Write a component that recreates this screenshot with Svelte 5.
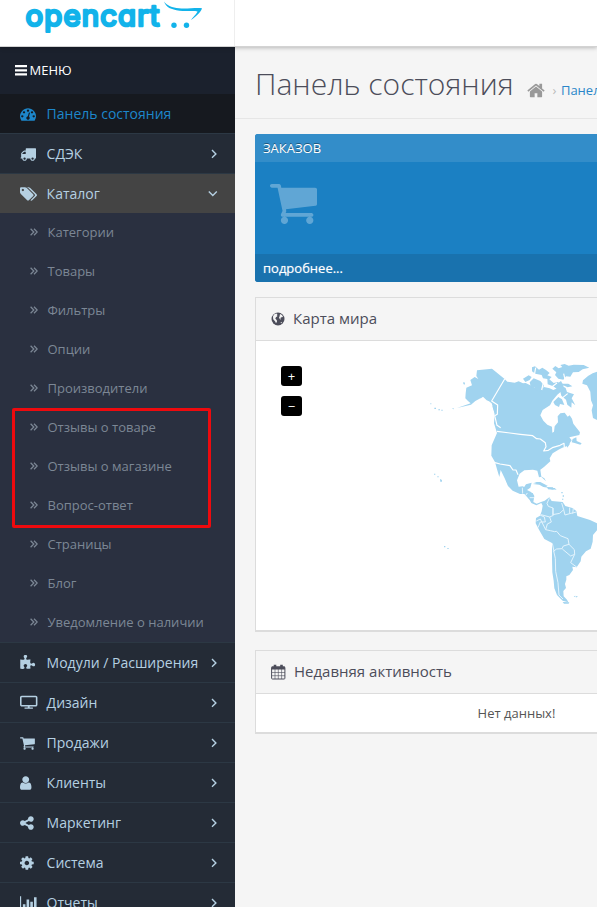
<script>
  const icons = {
    dash: 'M384 1152q0-53-37.500-90.500t-90.500-37.500-90.500 37.500-37.500 90.500 37.500 90.500 90.500 37.500 90.500-37.500 37.500-90.500zm192-448q0-53-37.500-90.500t-90.500-37.500-90.500 37.500-37.500 90.500 37.500 90.500 90.500 37.500 90.500-37.500 37.500-90.500zm428 481l101-382q6-26-7.500-48.500t-38.500-29.500-48 6.500-30 39.500l-101 382q-60 5-107 43.500t-63 98.500q-20 77 20 146t117 89 146-20 89-117q16-60-6-117t-72-91zm660-33q0-53-37.500-90.500t-90.500-37.500-90.500 37.500-37.500 90.500 37.500 90.500 90.500 37.500 90.500-37.500 37.500-90.500zm-640-640q0-53-37.500-90.500t-90.500-37.500-90.500 37.500-37.500 90.500 37.500 90.500 90.500 37.500 90.500-37.500 37.500-90.500zm448 192q0-53-37.500-90.500t-90.500-37.500-90.500 37.500-37.500 90.500 37.500 90.500 90.500 37.500 90.500-37.500 37.500-90.500zm320 448q0 261-141 483-19 29-54 29h-1402q-35 0-54-29-141-221-141-483 0-182 71-348t191-286 286-191 348-71 348 71 286 191 191 286 71 348z',
    truck: 'M640 1408q0-52-38-90t-90-38-90 38-38 90 38 90 90 38 90-38 38-90zm-384-512h384v-256h-158q-13 0-22 9l-195 195q-9 9-9 22v30zm1280 512q0-52-38-90t-90-38-90 38-38 90 38 90 90 38 90-38 38-90zm256-1088v1024q0 15-4 26.500t-13.500 18.500-16.500 11.500-23.500 6-22.500 2-25.500 0-22.500-.5q0 106-75 181t-181 75-181-75-75-181h-384q0 106-75 181t-181 75-181-75-75-181h-64q-3 0-22.500.5t-25.500 0-22.500-2-23.500-6-16.500-11.500-13.500-18.500-4-26.500q0-26 19-45t45-19v-320q0-8-.5-35t0-38 2.500-34.500 6.500-37 14-30.500 22.500-30l198-198q19-19 50.500-32t58.500-13h160v-192q0-26 19-45t45-19h1024q26 0 45 19t19 45z',
    tags: 'M448 448q0-53-37.500-90.500t-90.500-37.500-90.500 37.500-37.500 90.500 37.500 90.500 90.500 37.500 90.500-37.500 37.500-90.500zm1067 576q0 53-37 90l-491 492q-39 37-91 37-53 0-90-37l-715-716q-38-37-64.500-101t-26.500-117v-416q0-52 38-90t90-38h416q53 0 117 26.500t102 64.500l715 714q37 39 37 91zm384 0q0 53-37 90l-491 492q-39 37-91 37-36 0-59-14t-53-45l470-470q37-37 37-90 0-52-37-91l-715-714q-38-38-102-64.500t-117-26.500h224q53 0 117 26.500t102 64.500l715 714q37 39 37 91z',
    puzzle: 'M1755 1083q0 81-44.500 135t-123.500 54q-41 0-77.500-17.500t-59-38-56.500-38-71-17.500q-110 0-110 124 0 39 16 115t15 115v5q-22 0-33 1-34 3-97.500 11.500t-115.500 13.500-98 5q-61 0-103-26.500t-42-83.500q0-37 17.500-71t38-56.500 38-59 17.500-77.500q0-79-54-123.500t-135-44.500q-84 0-143 45.500t-59 127.500q0 43 15 83t33.500 64.500 33.500 53 15 50.500q0 45-46 89-37 35-117 35-95 0-245-24-9-2-27.500-4t-27.500-4l-13-2q-1 0-3-1-2 0-2-1v-1024q2 1 17.500 3.500t34 5 21.500 3.500q150 24 245 24 80 0 117-35 46-44 46-89 0-22-15-50.500t-33.500-53-33.500-64.500-15-83q0-82 59-127.500t144-45.500q80 0 134 44.500t54 123.500q0 41-17.500 77.500t-38 59-38 56.500-17.500 71q0 57 42 83.500t103 26.500q64 0 180-15t163-17v2q-1 2-3.500 17.500t-5 34-3.500 21.500q-24 150-24 245 0 80 35 117 44 46 89 46 22 0 50.500-15t53-33.500 64.500-33.500 83-15q82 0 127.500 59t45.500 143z',
    screen: 'M1776 1104v-832q0-16-16-16h-1568q-16 0-16 16v832q0 16 16 16h1568q16 0 16-16zm176-832v832q0 80-56 136t-136 56h-680v112h336q32 0 32 32v80q0 32-32 32h-880q-32 0-32-32v-80q0-32 32-32h336v-112h-680q-80 0-136-56t-56-136v-832q0-80 56-136t136-56h1568q80 0 136 56t56 136z',
    cart: 'M704 1536q0 52-38 90t-90 38-90-38-38-90 38-90 90-38 90 38 38 90zm896 0q0 52-38 90t-90 38-90-38-38-90 38-90 90-38 90 38 38 90zm128-1088v512q0 24-16.500 42.500t-40.500 21.500l-1044 122q13 60 13 70 0 16-24 64h920q26 0 45 19t19 45-19 45-45 19h-1024q-26 0-45-19t-19-45q0-11 8-31.500t16-36 21.500-40 15.500-29.500l-177-823h-204q-26 0-45-19t-19-45 19-45 45-19h256q16 0 28.500 6.500t19.500 15.500 13 24.500 8 26 5.500 29.500 4.500 26h1201q26 0 45 19t19 45z',
    user: 'M1536 1399q0 109-62.500 187t-150.500 78h-854q-88 0-150.500-78t-62.500-187q0-85 8.500-160.500t31.500-152 58.500-131 94-89 134.500-34.500q131 128 313 128t313-128q76 0 134.500 34.500t94 89 58.500 131 31.500 152 8.500 160.500zm-256-887q0 159-112.500 271.500t-271.500 112.500-271.500-112.500-112.500-271.500 112.500-271.500 271.500-112.500 271.500 112.500 112.500 271.500z',
    share: 'M1344 1024q133 0 226.500 93.500t93.500 226.500-93.500 226.500-226.500 93.500-226.500-93.500-93.500-226.500q0-12 2-34l-360-180q-92 86-218 86-133 0-226.500-93.500t-93.500-226.500 93.500-226.500 226.500-93.500q126 0 218 86l360-180q-2-22-2-34 0-133 93.500-226.500t226.500-93.500 226.500 93.500 93.500 226.500-93.500 226.500-226.500 93.500q-126 0-218-86l-360 180q2 22 2 34t-2 34l360 180q92-86 218-86z',
    cog: 'M1152 896q0-106-75-181t-181-75-181 75-75 181 75 181 181 75 181-75 75-181zm512-109v222q0 12-8 23t-20 13l-185 28q-19 54-39 91 35 50 107 138 10 12 10 25t-9 23q-27 37-99 108t-94 71q-12 0-26-9l-138-108q-44 23-91 38-16 136-29 186-7 28-36 28h-222q-14 0-24.500-8.500t-11.500-21.500l-28-184q-49-16-90-37l-141 107q-10 9-25 9-14 0-25-11-126-114-165-168-7-10-7-23 0-12 8-23 15-21 51-66.500t54-70.500q-27-50-41-99l-183-27q-13-2-21-12.500t-8-23.500v-222q0-12 8-23t19-13l186-28q14-46 39-92-40-57-107-138-10-12-10-24 0-10 9-23 26-36 98.500-107.500t94.500-71.500q13 0 26 10l138 107q44-23 91-38 16-136 29-186 7-28 36-28h222q14 0 24.500 8.500t11.500 21.500l28 184q49 16 90 37l142-107q9-9 24-9 13 0 25 10 129 119 165 170 7 8 7 22 0 12-8 23-15 21-51 66.500t-54 70.500q26 50 41 98l183 28q13 2 21 12.500t8 23.500z',
    bars: 'M0 128h128v1408h1920v128H0zM320 1024h288v384H320zM736 512h288v896H736zM1152 768h288v640h-288zM1568 256h288v1152h-288z',
    home: 'M1472 992v480q0 26-19 45t-45 19h-384v-384h-256v384h-384q-26 0-45-19t-19-45v-480q0-1 .5-3t.5-3l575-474 575 474q1 2 1 6zm223-69l-62 74q-8 9-21 11h-3q-13 0-21-7l-692-577-692 577q-12 8-24 7-13-2-21-11l-62-74q-8-10-7-23.500t11-21.500l719-599q32-26 76-26t76 26l244 204v-195q0-14 9-23t23-9h192q14 0 23 9t9 23v408l219 182q10 8 11 21.500t-7 23.500z'
  };
  // x origin of each glyph, so that every icon starts at the same left edge
  const origin = { user: 256, share: 128, cog: 128, puzzle: 64, cart: 64 };

  const subitems = ['Категории', 'Товары', 'Фильтры', 'Опции', 'Производители', 'Отзывы о товаре', 'Отзывы о магазине', 'Вопрос-ответ', 'Страницы', 'Блог', 'Уведомление о наличии'];
  const lower = [
    ['puzzle', 'Модули / Расширения'],
    ['screen', 'Дизайн'],
    ['cart', 'Продажи'],
    ['user', 'Клиенты'],
    ['share', 'Маркетинг'],
    ['cog', 'Система'],
    ['bars', 'Отчеты']
  ];
</script>

{#snippet glyph(name)}
  <svg class="glyph" viewBox="{origin[name] ?? 0} 0 2048 1792" fill="currentColor"><path d={icons[name]} fill-rule="evenodd" /></svg>
{/snippet}

{#snippet row(name, label, open)}
  <li class="item" class:open>
    {@render glyph(name)}<span>{label}</span>
    <svg class="arrow" viewBox="0 0 10 10" fill="none" stroke="currentColor" stroke-width="1.400">
      <path d={open ? 'M.8 2.500l4 4 4-4' : 'M4 1l3.900 3.900L4 8.800'} />
    </svg>
  </li>
{/snippet}

<div class="page">
  <header>
    <div class="brand">
      <svg width="234" height="46" viewBox="0 0 234 46">
        <text x="25.500" y="26.300" textLength="134" lengthAdjust="spacing" class="logo">opencart</text>
        <path d="M164 1.500c3 4.300 8 6 15 6.700 8 .7 18-.9 23 0-1 3.800-6 8.300-11 11.800 3-4 6-6.500 6.500-8.500-4-1.200-11 .2-18-.8C171 9.500 166 7.500 164 1.500z" fill="#12b3ea" />
        <circle cx="174" cy="25.200" r="2.700" fill="#12b3ea" /><circle cx="186.500" cy="25.200" r="2.700" fill="#12b3ea" />
      </svg>
    </div>
  </header>
  <div class="body">
    <nav>
      <div class="menu">
        <svg width="12" height="11" viewBox="0 0 12 11" fill="#fff"><path d="M0 0h12v2.200H0zM0 4.200h12v2.200H0zM0 8.300h12v2.200H0z" /></svg>
        <span>МЕНЮ</span>
      </div>
      <ul>
        <li class="item active">{@render glyph('dash')}<span>Панель состояния</span></li>
        {@render row('truck', 'СДЭК', false)}
        {@render row('tags', 'Каталог', true)}
      </ul>
      <ul class="sub">
        {#each subitems as s}
          <li>
            <svg width="8" height="8" viewBox="0 0 8 8" fill="none" stroke="currentColor" stroke-width="1.250"><path d="M.6.8L3.800 4 .6 7.200M4 .8L7.200 4 4 7.200" /></svg>
            <span>{s}</span>
          </li>
        {/each}
        <div class="mark"></div>
      </ul>
      <ul>
        {#each lower as [icon, label]}
          {@render row(icon, label, false)}
        {/each}
      </ul>
    </nav>
    <main>
      <div class="title">
        <h1>Панель состояния</h1>
        <svg class="home" viewBox="64 0 1664 1792" fill="#999"><path d={icons.home} /></svg>
        <span class="sep">›</span>
        <a>Панель состояния</a>
      </div>
      <section class="tile">
        <div class="tile-head">ЗАКАЗОВ</div>
        <div class="tile-body"><svg viewBox="64 256 1664 1408" preserveAspectRatio="none" fill="#fff"><path d={icons.cart} /></svg></div>
        <div class="tile-foot">подробнее...</div>
      </section>
      <section class="panel map">
        <div class="head">
          <svg width="14" height="14" viewBox="0 0 14 14">
            <circle cx="7" cy="7" r="6.500" fill="#4c4d5a" />
            <path d="M3 2.600L5 1.500 6.500 2 5.800 3.200 6.600 4 5 5.200 4.300 6.500 5.800 8.200 6 9.500 5 11.300 4.200 9.500 2.200 7.200 2 4.500zM9 2L11 3 12 5 10.500 5.200 9.300 6 10 7.500 9 7.200 8 5.800 8.500 4.500zM9.300 10.800l1.800-1-.6 1.500z" fill="#f5f5f5" />
          </svg>
          <span>Карта мира</span>
        </div>
        <div class="canvas">
          <svg class="world" width="341" height="290" viewBox="256 341 341 290">
            <g transform="translate(420 355) scale(.33333)" fill="#a0d3ef" stroke-linejoin="round">
              <path d="M171 46L216 41 254 72 262 80 284 83 296 79 309 85 317 84 337 94 346 99 365 103 372 96 389 100 400 105 414 99 411 86 423 78 431 92 425 108 412 119 397 137 390 151 368 165 361 181 370 197 382 209 396 215 397 233 402 230 404 214 414 202 413 184 421 175 434 173 443 185 449 181 456 191 460 206 480 232 478 240 448 247 455 256 444 272 427 278 418 283 398 295 389 310 391 319 372 336 361 344 364 365 357 367 352 347 339 344 313 346 299 356 291 376 296 396 309 401 318 388 335 383 331 398 321 405 333 411 339 417 300 417 278 407 264 393 254 370 242 345 238 366 231 343 225 321 214 302 215 271 231 234 222 205 224 174 215 145 207 139 200 136 189 125 179 133 184 128 166 138 153 149 111 159 152 145 144 138 136 130 137 115 139 98 156 91 151 75 164 66 175 72 169 63z" />
              <path d="M309 71L326 61 335 66 329 75 316 81zM329 82L341 70 361 78 372 91 366 111 350 107 342 96 333 99zM336 37L345 34 357 44 367 38 378 45 389 54 382 61 395 66 388 73 401 84 414 81 423 91 437 99 441 111 462 118 455 130 466 151 455 142 454 158 442 149 438 134 424 122 421 110 400 94 383 88 382 72 369 70 365 60 346 56 336 49zM397 41L406 33 416 40 427 36 421 30 434 27 446 32 461 29 491 30 508 38 488 43 476 51 459 52 451 65 438 64 430 74 415 71 405 60 409 52zM420 86l25 0 12 8-14 3zM504 63L518 55 531 50 531 195 519 189 515 166 519 151 513 136 511 110 501 91 487 86 489 76zM400 141l15-15 11 7 7 17-13-3-3 9-12-6zM458 252l11-5 1 11 15 7-4 4-17-5-9-2zM438 261l12 5-8 12zM338 387l15-4 22 7 10 8-15-2-12-7zM390 399l14 0 6 5-16-1zM361 363l12 7 5 9zM217 154l7 1 4 22-4-1z" />
              <path d="M130 81l5 2-1 6-4-2zM43 158h5v4h-5zM55 163h5v3h-5zM64 164h4v3h-4zM95 161l7-1-1 3zM42 356h4v3h-4zM52 364h4v3h-4zM60 372l6 3-1 6-4-1zM31 145h3v3h-3zM72 573h4v4h-4zM82 579h4v3h-4z" />
              <g fill="none" stroke="#fff" stroke-width="3.500">
                <path d="M254 72L215 138 233 150 232 178 224 182 231 211 242 218M231 229L301 238 338 242 350 251 361 252 376 263 378 275 371 288 385 286 397 278 420 271 432 265 433 277M225 323L240 327 270 332 279 345 288 345 294 359" />
                <path d="M347 38l-5 28M372 75l-7 30M398 94l13-10M431 56l6 26M443 116l-15 12" />
              </g>
            </g>
            <g transform="translate(480 480) scale(.33333)" fill="#a0d3ef" stroke-linejoin="round">
              <path d="M78 0L83 13 101 29 119 37 134 43 149 60 154 69 169 76 184 69 188 77 185 94 180 107 168 114 167 130 177 149 193 177 216 189 216 236 217 277 221 302 223 325 231 345 248 362 265 367 261 359 251 349 250 333 258 324 255 312 259 299 259 289 268 285 279 270 277 260 290 262 302 244 304 230 318 214 332 206 338 185 339 165 351 151 351 130 330 120 292 108 289 93 277 84 256 78 248 66 215 63 208 52 194 62 183 66 170 71 160 66 163 48 158 39 139 39 132 33 134 22 128 19 111 21 109 0z" />
              <path d="M162 6L181 6 204 18 190 17 176 11zM201 21l18 1 2 7-17-1zM248 366l20 1-2 4-14 0zM281 349l5-2 0 5zM288 348l5 0-3 5zM244 36h4v4h-4zM248 46h4v4h-4zM246 56h4v3h-4z" />
              <g fill="none" stroke="#e4f4fd" stroke-width="3">
                <path d="M208 55L201 70 205 79 219 84 220 106 209 111 214 126 202 132 197 149 181 117 169 123M197 149L211 152 224 155 230 154 241 167 264 176 267 193 250 198 246 206 230 207 221 213 226 235 227 274 234 308 237 345 249 357M217 190L222 214M267 193L283 209 284 223 272 228 247 207M284 223L272 248 291 262M219 84L218 104 239 100 251 89 245 69M251 89l4 16 14-4 0-18M269 101l20-5M280 85l-2 16M180 105l13 6 3 15-15 0-7 17M127 23l1 18M142 39l-7 10M149 53l13 0M209 111l-26-7" />
              </g>
            </g>
          </svg>
          <div class="zoom">
            <button>+</button>
            <button>−</button>
          </div>
        </div>
      </section>
      <section class="panel">
        <div class="head">
          <svg width="15" height="16" viewBox="0 0 15 16" fill="none" stroke="#4c4d5a">
            <rect x=".6" y="3" width="13.300" height="12" rx=".8" />
            <path d="M.6 4h13.300" stroke-width="3" /><path d="M4 .8v3M10.500 .8v3" stroke-width="2.600" />
            <path d="M1 8.500h13M1 11.700h13M4 5v10M7.300 5v10M10.600 5v10" stroke-width=".6" />
          </svg>
          <span>Недавняя активность</span>
        </div>
        <div class="empty">Нет данных!</div>
      </section>
    </main>
  </div>
</div>

<style>
  .page { width: 597px; height: 907px; overflow: hidden; background: #f5f5f5; font-family: 'Open Sans', sans-serif; font-size: 13px; color: #555; display: flex; flex-direction: column; }
  header { height: 46px; flex: none; background: #fff; border-bottom: 1px solid #d3d3d3; box-shadow: 0 1px 4px rgba(0, 0, 0, .25); display: flex; position: relative; }
  .brand { width: 234px; border-right: 1px solid #eee; }
  .brand svg { display: block; }
  .logo { font-family: Inter, sans-serif; font-size: 29.500px; font-feature-settings: 'cv11'; fill: #12b3ea; stroke: #12b3ea; stroke-width: 2.600; stroke-linejoin: round; stroke-linecap: round; }
  .body { display: flex; flex: 1; min-height: 0; }
  nav { width: 235px; flex: none; background: #242b36; color: #b5d0e2; overflow: hidden; }
  .menu { box-sizing: border-box; height: 47px; display: flex; align-items: center; gap: 2.500px; padding: 0 0 1px 15px; background: #1b212d; color: #fff; }
  ul { margin: 0; padding: 0; list-style: none; }
  .item { box-sizing: border-box; height: 40px; border-top: 1px solid #2c3844; display: flex; align-items: center; padding: 0 17px 0 20px; font-size: 14px; }
  .item span { flex: 1; white-space: nowrap; }
  .item.active { height: 39px; border-top: 0; background: #16191f; color: #1d87cb; }
  .item.open { background: #444; }
  .glyph { width: 18.300px; height: 16px; margin-right: 8.300px; flex: none; }
  .arrow { width: 10px; height: 10px; }
  .sub { position: relative; background: #2a3040; color: #7c8795; }
  .sub li { box-sizing: border-box; height: 39px; display: flex; align-items: center; gap: 9.500px; padding: 0 0 2px 30px; }
  .mark { position: absolute; left: 12px; top: 195px; width: 193px; height: 114px; border: 3px solid #ee0a0e; border-radius: 2px; }
  main { flex: 1; min-width: 0; overflow: hidden; padding-left: 20px; }
  .title { height: 71px; margin-left: -20px; padding-left: 20px; border-bottom: 1px solid #e6e6e6; display: flex; align-items: baseline; white-space: nowrap; }
  h1 { margin: 17px 0 0; font-size: 30px; line-height: 40px; font-weight: 300; color: #4c4d5a; }
  .home { width: 18px; height: 19px; margin-left: 13px; flex: none; align-self: flex-start; margin-top: 34px; }
  .sep { color: #bbb; margin: 0 4.500px 0 8px; }
  .title a { color: #2a86c9; }
  .tile { margin-top: 15px; width: 400px; height: 148px; border-radius: 3px; overflow: hidden; background: #1b80c3; color: #fff; }
  .tile-head { height: 28px; line-height: 28px; padding-left: 8px; background: #338dc9; text-shadow: 0 -1px 0 rgba(0, 0, 0, .4); }
  .tile-body { height: 92px; box-sizing: border-box; padding: 22px 15px; }
  .tile-body svg { width: 47px; height: 40px; opacity: .3; display: block; }
  .tile-foot { height: 28px; line-height: 29px; padding-left: 8px; background: #1972ae; text-shadow: 0 0 1px rgba(255,255,255,.5); }
  .panel { box-sizing: border-box; width: 523px; margin-top: 15px; border: 1px solid #dcdcdc; border-bottom-width: 2px; background: #fff; }
  .head { box-sizing: border-box; height: 43px; display: flex; align-items: center; gap: 8px; padding: 0 0 1px 15px; background: #f5f5f5; border-bottom: 1px solid #dcdcdc; font-size: 15px; color: #4c4d5a; }
  .head span { margin-top: -1px; }
  .map { height: 335px; }
  .map + .panel { margin-top: 18px; }
  .canvas { display: flex; position: relative; }
  .zoom { position: absolute; left: 25px; top: 25px; display: flex; flex-direction: column; gap: 10px; }
  button { width: 21px; height: 20px; padding: 0; border: 0; border-radius: 3px; background: #000; color: #fff; font: 13px 'Open Sans', sans-serif; line-height: 20px; }
  .empty { height: 38px; line-height: 38px; text-align: center; }
</style>
